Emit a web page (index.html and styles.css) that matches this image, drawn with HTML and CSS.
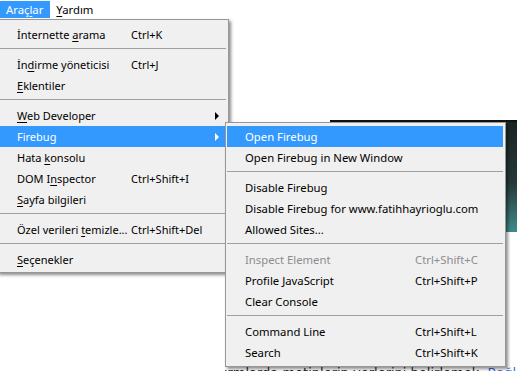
FILE: index.html
```html
<!DOCTYPE html>
<html lang="tr">
<head>
<meta charset="UTF-8">
<title>Araçlar menüsü</title>
<link rel="stylesheet" href="styles.css">
</head>
<body>
    <!-- Menu bar -->
    <div class="menubar">
        <span class="top-item active">Araç<u>l</u>ar</span>
        <span class="top-item"><u>Y</u>ardım</span>
    </div>

    <!-- Page behind the menus -->
    <div class="page">
        <div class="banner"></div>
        <p class="text">ırmlarda metinlerin yerlerini belirlemek. <a href="#">Bağlam</a></p>
    </div>

    <!-- Tools menu -->
    <div class="menu main-menu">
        <div class="item"><span class="label">İnternette <u>a</u>rama</span><span class="key">Ctrl+K</span></div>
        <div class="sep"></div>
        <div class="item"><span class="label">İn<u>d</u>irme yöneticisi</span><span class="key">Ctrl+J</span></div>
        <div class="item"><span class="label"><u>E</u>klentiler</span></div>
        <div class="sep"></div>
        <div class="item"><span class="label"><u>W</u>eb Developer</span><span class="arrow"></span></div>
        <div class="item hover"><span class="label">Firebug</span><span class="arrow"></span></div>
        <div class="item"><span class="label">Hata <u>k</u>onsolu</span></div>
        <div class="item"><span class="label">DOM I<u>n</u>spector</span><span class="key">Ctrl+Shift+I</span></div>
        <div class="item"><span class="label"><u>S</u>ayfa bilgileri</span></div>
        <div class="sep"></div>
        <div class="item"><span class="label">Özel verileri <u>t</u>emizle...</span><span class="key">Ctrl+Shift+Del</span></div>
        <div class="sep"></div>
        <div class="item"><span class="label"><u>S</u>eçenekler</span></div>
    </div>

    <!-- Firebug submenu -->
    <div class="menu sub-menu">
        <div class="item hover"><span class="label">Open Firebug</span></div>
        <div class="item"><span class="label">Open Firebug in New Window</span></div>
        <div class="sep"></div>
        <div class="item"><span class="label">Disable Firebug</span></div>
        <div class="item"><span class="label">Disable Firebug for www.fatihhayrioglu.com</span></div>
        <div class="item"><span class="label">Allowed Sites...</span></div>
        <div class="sep"></div>
        <div class="item disabled"><span class="label">Inspect Element</span><span class="key">Ctrl+Shift+C</span></div>
        <div class="item"><span class="label">Profile JavaScript</span><span class="key">Ctrl+Shift+P</span></div>
        <div class="item"><span class="label">Clear Console</span></div>
        <div class="sep"></div>
        <div class="item"><span class="label">Command Line</span><span class="key">Ctrl+Shift+L</span></div>
        <div class="item"><span class="label">Search</span><span class="key">Ctrl+Shift+K</span></div>
    </div>
</body>
</html>
```

FILE: styles.css
```css
/* General */
* {
    margin: 0;
    padding: 0;
    box-sizing: border-box;
}

body {
    position: relative;
    width: 517px;
    height: 371px;
    overflow: hidden;
    background: #fff;
    font-family: 'Noto Sans', sans-serif;
    font-size: 11.3px;
    color: #000;
}

u {
    text-decoration: underline;
    text-underline-offset: 2px;
}

/* Menu bar */
.menubar {
    display: flex;
    height: 19px;
    background: #fff;
}

.top-item {
    padding: 1px 7px 0 6px;
    height: 17px;
    margin-top: 1px;
    line-height: 15px;
}

.top-item.active {
    background: #3399ff;
    color: #fff;
}

/* Page content behind the menus */
.page {
    padding-top: 101px;
}

.banner {
    margin-left: 330px;
    height: 112px;
    border-top: 2px solid #111;
    background: linear-gradient(#1c2424, #26393a 55%, #3f8a8a);
}

.text {
    width: 293px;
    margin: 133px 0 0 224px;
    overflow: hidden;
    font-family: 'DejaVu Sans', sans-serif;
    font-size: 13px;
    white-space: nowrap;
    color: #222;
}

.text a {
    color: #3a6fd8;
    text-decoration: none;
}

/* Menus */
.menu {
    position: absolute;
    background: #f0f0f0;
    border: 1px solid #979797;
    box-shadow: 2px 2px 3px rgba(0, 0, 0, 0.45);
}

.main-menu {
    left: -3px;
    top: 19px;
    width: 232px;
    padding: 4px 2px 2px 2px;
    font-size: 11px;
}

.sub-menu {
    left: 225px;
    top: 122px;
    width: 281px;
    padding: 3px 2px 3px 1px;
}

.item {
    display: flex;
    align-items: center;
    height: 21px;
    white-space: nowrap;
}

.main-menu .item {
    padding-left: 17px;
}

.sub-menu .item {
    padding-left: 18px;
}

.main-menu .label {
    width: 114px;
}

.sub-menu .label {
    width: 170px;
}

.item.hover {
    background: #3399ff;
    color: #fff;
}

.item.disabled {
    color: #8d8d8d;
}

.key {
    flex: 1;
}

.arrow {
    margin-left: auto;
    margin-right: 7px;
    width: 0;
    height: 0;
    border-top: 4px solid transparent;
    border-bottom: 4px solid transparent;
    border-left: 4px solid #000;
}

.item.hover .arrow {
    border-left-color: #fff;
}

.sep {
    height: 9px;
    border-top: 3px solid transparent;
    background-clip: padding-box;
}

.sep::after {
    content: '';
    display: block;
    height: 1px;
    background: #a0a0a0;
}
```
